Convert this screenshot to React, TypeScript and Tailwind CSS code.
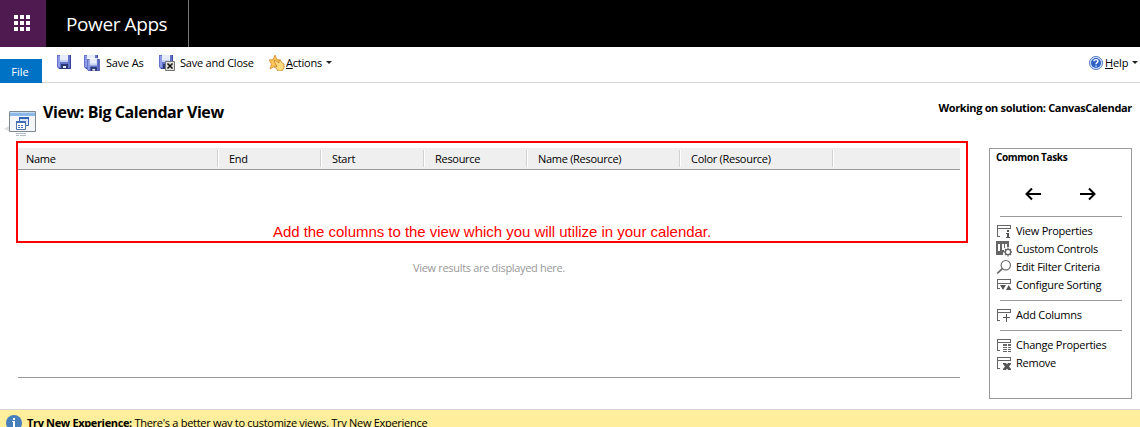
import type { ReactNode } from "react";

type IconKind = "props" | "controls" | "filter" | "sort" | "add" | "change" | "remove";

function Floppy({ x = 0, y = 0 }: { x?: number; y?: number }) {
  return (
    <g transform={`translate(${x} ${y})`}>
      <path d="M0 0H14V14H2L0 12Z" fill="#6573cc" />
      <path d="M13 0h1v14H2v-1h11z" fill="#34449a" />
      <path d="M1 1h2v11H1z" fill="#8f9ce6" />
      <path d="M3 0h8v7H3z" fill="#e6ecfa" />
      <path d="M3 5h8v2H3z" fill="#c4d2f0" />
      <path d="M4 9h7v5H4z" fill="#2b3876" />
      <path d="M6 11h3v2H6z" fill="#e4e8f4" />
    </g>
  );
}

function TaskIcon({ kind }: { kind: IconKind }) {
  const frame = <path d="M4 12.500H1.500V1.500H14.500V4.500H1.500" fill="none" stroke="#666" />;
  return (
    <svg width="16" height="16" viewBox="0 0 16 16" shapeRendering="crispEdges" className="shrink-0 translate-y-px overflow-visible">
      {kind === "props" && (
        <>
          {frame}
          <path d="M11 6h2v2h-2zM10 9h3v4h1v1H10v-1h1v-3h-1z" fill="#555" />
        </>
      )}
      {kind === "controls" && (
        <g shapeRendering="auto" transform="translate(0 -1)">
          <path d="M0 0H13V6H11V3H9V7H8V3H6V9H8V11H7V14H0Z" fill="#666" />
          <path d="M2 3h2v7H2z" fill="#fff" />
          <circle cx="12" cy="11" r="2.700" fill="#fff" stroke="#666" strokeWidth="1.300" />
          <path d="M12 6.500v1.500M12 14v1.500M7.500 11H9M15 11h1M9 8l1 1M14 13l1 1M15 8l-1 1M10 13l-1 1" stroke="#666" strokeWidth="1.300" />
        </g>
      )}
      {kind === "filter" && (
        <g shapeRendering="auto" fill="none" stroke="#666">
          <circle cx="9.800" cy="5.200" r="4.700" strokeWidth="1.100" />
          <path d="M6.300 8.700L1.200 13.500" strokeWidth="1.700" />
        </g>
      )}
      {kind === "sort" && (
        <>
          <path d="M4 10.500H1.500V1.500H14.500V5.500H1.500" fill="none" stroke="#666" />
          <path d="M4 7h6l-3 5zM10 12h5.500l-2.700-5z" fill="#555" shapeRendering="auto" />
        </>
      )}
      {kind === "add" && (
        <>
          {frame}
          <path d="M10.500 6v8M7 9.500h7" stroke="#555" />
        </>
      )}
      {kind === "change" && (
        <>
          {frame}
          <path d="M7 6h4v2H7zM12 6h3v2h-3zM7 9h4v1H7zM12 9h3v1h-3zM7 11h4v1H7zM12 11h3v1h-3zM7 13h4v1H7zM12 13h3v1h-3z" fill="#666" />
        </>
      )}
      {kind === "remove" && (
        <>
          {frame}
          <path d="M7 7h3l1 1.500 1-1.500h3v1l-2 2.500 2 2.500v1h-3l-1-1.500-1 1.500H7v-1l2-2.500L7 8z" fill="#555" shapeRendering="auto" />
        </>
      )}
    </svg>
  );
}

function Task({ kind, children }: { kind: IconKind; children: ReactNode }) {
  return (
    <li className="flex h-[18px] items-center gap-1 whitespace-nowrap">
      <TaskIcon kind={kind} />
      <span>{children}</span>
    </li>
  );
}

function Caret() {
  return (
    <svg width="6" height="3" viewBox="0 0 6 3" className="shrink-0">
      <path d="M0 0h6L3 3z" fill="#222" />
    </svg>
  );
}

const columns = [
  { label: "Name", cell: "w-[200px]" },
  { label: "End", cell: "w-[103px]" },
  { label: "Start", cell: "w-[103px]" },
  { label: "Resource", cell: "w-[103px]" },
  { label: "Name (Resource)", cell: "w-[153px]" },
  { label: "Color (Resource)", cell: "w-[153px]" },
];

export default function App() {
  return (
    <div className="flex h-[427px] w-[1140px] flex-col overflow-hidden bg-white font-['Open_Sans','Noto_Sans',sans-serif] text-[11px] leading-[16px] tracking-[-0.29px] text-black">
      <header className="flex h-[47px] shrink-0 bg-black text-white">
        <div className="flex w-[46px] items-center justify-center bg-[#4f1a4f]">
          <svg width="16" height="16" viewBox="0 0 16 16" fill="#fff" className="mr-[2px] mb-[1px]">
            {[0, 6, 12].map((y) => [0, 6, 12].map((x) => <rect key={`${x}-${y}`} x={x} y={y} width="4" height="4" />))}
          </svg>
        </div>
        <div className="flex w-[143px] items-center border-r border-[#777] pl-5 text-[19px] tracking-[-0.4px] whitespace-nowrap">
          Power Apps
        </div>
      </header>

      <nav className="flex h-[36px] shrink-0 items-end border-b border-[#d6d6d6] whitespace-nowrap">
        <div className="-mb-px flex h-[24px] w-[42px] items-center justify-center bg-[#0072c6] pt-[2px] pr-[2px] tracking-normal text-white">File</div>
        <div className="flex h-full grow items-center pb-1 pl-[15px]">
          <svg width="15" height="15" viewBox="0 0 15 15" className="shrink-0">
            <Floppy />
          </svg>
          <svg width="16" height="16" viewBox="0 0 16 16" className="ml-3 shrink-0">
            <Floppy />
            <path d="M3 3h13v13H3z" fill="#fff" opacity=".8" />
            <g transform="translate(3 4) scale(.9)">
              <Floppy />
            </g>
          </svg>
          <span className="ml-[6px] w-[37px] tracking-[-0.2px]">Save As</span>
          <svg width="16" height="16" viewBox="0 0 16 16" className="ml-4 shrink-0">
            <Floppy />
            <path d="M6.500 6.500h9v9h-9z" fill="#deded8" stroke="#777" />
            <path d="M8.500 8.500l5 5M13.500 8.500l-5 5" stroke="#111" strokeWidth="1.500" />
          </svg>
          <span className="ml-[5px] w-[73px] tracking-[-0.22px]">Save and Close</span>
          <svg width="16" height="16" viewBox="0 0 16 16" className="ml-4 shrink-0">
            <path d="M6 0l1.800 4.500 4.200.5-3 3.500 1 5L6 11l-5 3 1.500-5L0 5l4.200-.5z" fill="#ffc65c" stroke="#d98a2b" strokeWidth=".8" />
            <path d="M5 6l1-1 4 3V5.500h1.500L13 8l2 1v4l-2 3H9l-2-3-2-1 1-1 2 .5z" fill="#ffdc80" stroke="#bd8428" strokeWidth=".8" />
          </svg>
          <span className="w-[37px] pl-px tracking-[-0.22px]"><u>A</u>ctions</span>
          <span className="ml-[4px]"><Caret /></span>
          <div className="mr-[2px] ml-auto flex items-center">
            <svg width="14" height="14" viewBox="0 0 14 14">
              <circle cx="7" cy="7" r="6.500" fill="#dce8fa" stroke="#4d7bc9" />
              <circle cx="7" cy="7" r="5" fill="#2b61c4" />
              <path d="M5 5.300C5 3 9 3 9 5.300 9 6.800 7 6.600 7 8.300M7 9.400v1.300" stroke="#fff" strokeWidth="1.400" fill="none" />
            </svg>
            <span className="mr-[4px] ml-[2px] w-[23px] tracking-[-0.1px]"><u>H</u>elp</span>
            <Caret />
          </div>
        </div>
      </nav>

      <div className="flex h-[65px] shrink-0 justify-between pr-2 pl-1 whitespace-nowrap">
        <div className="flex">
          <svg width="34" height="30" viewBox="0 0 34 30" className="mt-[26px]">
            <path d="M0 20l5-3v5z" fill="#ddd" />
            <path d="M5.500 2.500h26v20h-26z" fill="#f4f6f8" stroke="#808890" />
            <path d="M6 3h25v4H6z" fill="#8db7e6" />
            <path d="M6 3h25v1H6z" fill="#c3dcf5" />
            <path d="M15.500 8.500h9v8h-9z" fill="#dce8fa" stroke="#3b68b5" />
            <path d="M15 8h10v2H15z" fill="#3462b8" />
            <path d="M12.500 12.500h9v8h-9z" fill="#fff" stroke="#4d72ad" />
            <path d="M12 12h10v2H12zM14 16h2v1h-2zM17 16h2v1h-2zM14 18h2v1h-2zM17 18h2v1h-2z" fill="#426eb9" />
            <path d="M12 24h10v1H12zM12 26h3v1h-3zM16 26h6v1h-6z" fill="#b5bdcb" />
          </svg>
          <h1 className="mt-[18px] ml-[5px] text-[16px] leading-[22px] font-bold tracking-[-0.42px]">View: Big Calendar View</h1>
        </div>
        <div className="mt-[17px] font-bold tracking-[-0.34px]">Working on solution: CanvasCalendar</div>
      </div>

      <main className="flex h-[261px] shrink-0 pr-2 pl-[18px]">
        <section className="relative h-[230px] w-[942px] border-b border-[#999]">
          <div className="flex h-[22px] items-center border-b border-[#999] bg-[#efefef]">
            {columns.map((c) => (
              <div key={c.label} className={`flex h-[17px] items-center border-r border-[#d2d2d2] pl-2 whitespace-nowrap shadow-[1px_0_0_#fff] [&:not(:first-child)]:pl-[11px] ${c.cell}`}>
                {c.label}
              </div>
            ))}
          </div>
          <p className="mt-[90px] text-center tracking-[-0.32px] text-[#999]">View results are displayed here.</p>
          <div className="absolute -top-[7px] -left-[2px] flex h-[102px] w-[952px] items-end justify-center border-2 border-[#f00] font-['Liberation_Sans',sans-serif] text-[15px] leading-[18px] tracking-[-0.03px] whitespace-nowrap text-[#f00]">
            Add the columns to the view which you will utilize in your calendar.
          </div>
        </section>

        <aside className="ml-auto h-[251px] w-[143px] border border-[#999] pr-[9px] pl-[6px]">
          <h2 className="text-[10px] font-bold tracking-[-0.35px]">Common Tasks</h2>
          <div className="mt-[21px] flex h-4 items-center gap-[37px] pl-[29px]">
            <svg width="17" height="14" viewBox="0 0 17 14" fill="none" stroke="#000" strokeWidth="2">
              <path d="M16 7H2M7 1.500L1.500 7 7 12.500" />
            </svg>
            <svg width="17" height="14" viewBox="0 0 17 14" fill="none" stroke="#000" strokeWidth="2">
              <path d="M1 7h14M10 1.500L15.500 7 10 12.500" />
            </svg>
          </div>
          <ul className="mt-[14px] tracking-[-0.25px]">
            <li className="mb-[5px] ml-1 h-px bg-[#999]" />
            <Task kind="props">View Properties</Task>
            <Task kind="controls">Custom Controls</Task>
            <Task kind="filter">Edit Filter Criteria</Task>
            <Task kind="sort">Configure Sorting</Task>
            <li className="mt-[6px] mb-[5px] ml-1 h-px bg-[#999]" />
            <Task kind="add">Add Columns</Task>
            <li className="mt-[6px] mb-[5px] ml-1 h-px bg-[#999]" />
            <Task kind="change">Change Properties</Task>
            <Task kind="remove">Remove</Task>
          </ul>
        </aside>
      </main>

      <footer className="flex h-[30px] shrink-0 border-t border-[#d6d6d6] bg-[#ffef9c] pt-[5px] pl-[6px] whitespace-nowrap">
        <svg width="16" height="16" viewBox="0 0 16 16">
          <circle cx="8" cy="8" r="8" fill="#477fba" />
          <path d="M7 3h2v2H7zM6 6h3v6h1v1H6v-1h1V7H6z" fill="#fff" />
        </svg>
        <p className="ml-[5px]">
          <b className="tracking-[-0.35px]">Try New Experience:</b> There's a better way to customize views. Try New Experience
        </p>
      </footer>
    </div>
  );
}
